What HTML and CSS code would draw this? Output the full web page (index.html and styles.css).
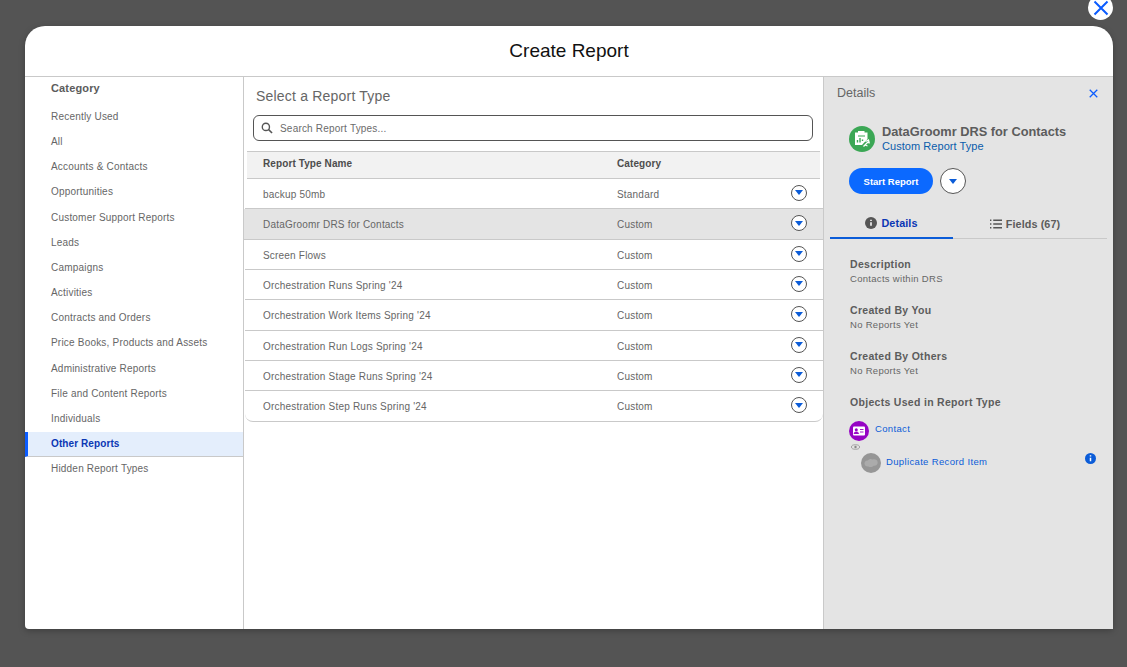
FILE: index.html
```html
<!DOCTYPE html>
<html lang="en">
<head>
<meta charset="utf-8">
<title>Create Report</title>
<link rel="stylesheet" href="styles.css">
</head>
<body>
<div class="modal">
  <button class="close-modal" aria-label="Close">
    <svg viewBox="0 0 16 16" width="16" height="16"><path d="M1.5 1.5l13 13M14.5 1.5l-13 13" fill="none" stroke="#0b5cff" stroke-width="2"/></svg>
  </button>
  <header class="modal-head">Create Report</header>
  <div class="modal-body">
    <nav class="cats">
      <h2 class="cats-title">Category</h2>
      <a class="cat">Recently Used</a>
      <a class="cat">All</a>
      <a class="cat">Accounts &amp; Contacts</a>
      <a class="cat">Opportunities</a>
      <a class="cat">Customer Support Reports</a>
      <a class="cat">Leads</a>
      <a class="cat">Campaigns</a>
      <a class="cat">Activities</a>
      <a class="cat">Contracts and Orders</a>
      <a class="cat">Price Books, Products and Assets</a>
      <a class="cat">Administrative Reports</a>
      <a class="cat">File and Content Reports</a>
      <a class="cat">Individuals</a>
      <a class="cat active">Other Reports</a>
      <a class="cat">Hidden Report Types</a>
    </nav>
    <main class="mid">
      <h2 class="mid-title">Select a Report Type</h2>
      <div class="search">
        <svg viewBox="0 0 14 14" width="12" height="12"><circle cx="5.7" cy="5.7" r="4.2" fill="none" stroke="#555" stroke-width="1.6"/><path d="M8.9 8.9l4 4" stroke="#555" stroke-width="1.8"/></svg>
        <span>Search Report Types...</span>
      </div>
      <div class="table">
        <div class="row head"><span class="c-name">Report Type Name</span><span class="c-cat">Category</span></div>
        <div class="row"><span class="c-name">backup 50mb</span><span class="c-cat">Standard</span><span class="drop"><i></i></span></div>
        <div class="row sel"><span class="c-name">DataGroomr DRS for Contacts</span><span class="c-cat">Custom</span><span class="drop"><i></i></span></div>
        <div class="row"><span class="c-name">Screen Flows</span><span class="c-cat">Custom</span><span class="drop"><i></i></span></div>
        <div class="row"><span class="c-name">Orchestration Runs Spring '24</span><span class="c-cat">Custom</span><span class="drop"><i></i></span></div>
        <div class="row"><span class="c-name">Orchestration Work Items Spring '24</span><span class="c-cat">Custom</span><span class="drop"><i></i></span></div>
        <div class="row"><span class="c-name">Orchestration Run Logs Spring '24</span><span class="c-cat">Custom</span><span class="drop"><i></i></span></div>
        <div class="row"><span class="c-name">Orchestration Stage Runs Spring '24</span><span class="c-cat">Custom</span><span class="drop"><i></i></span></div>
        <div class="row last"><span class="c-name">Orchestration Step Runs Spring '24</span><span class="c-cat">Custom</span><span class="drop"><i></i></span></div>
      </div>
    </main>
    <aside class="details">
      <div class="d-top">
        <span>Details</span>
        <svg viewBox="0 0 10 10" width="9" height="9"><path d="M.8.8l8.4 8.4M9.2.8L.8 9.2" stroke="#0b5cff" stroke-width="1.4" fill="none"/></svg>
      </div>
      <div class="d-id">
        <span class="d-icon">
          <svg viewBox="0 0 26 26" width="26" height="26"><circle cx="13" cy="13" r="13" fill="#3ba755"/><path d="M6 6.500h3V5h6.500v1.500h3V13l-5.500 6H6z" fill="#fff"/><path d="M9 10h7" stroke="#3ba755" stroke-width="1"/><path d="M8.500 16.500v-2.500M11 16.500v-4.500M13.500 15v-1.500" stroke="#3ba755" stroke-width="1.400"/><path d="M14.500 20.500l5.500-5.500M16.500 15.500l3-1.500.8 3.500M16 19l2.500 1" stroke="#fff" stroke-width="1.300" fill="none"/></svg>
        </span>
        <div>
          <div class="d-name">DataGroomr DRS for Contacts</div>
          <div class="d-sub">Custom Report Type</div>
        </div>
      </div>
      <div class="d-actions">
        <button class="start">Start Report</button>
        <span class="drop big"><i></i></span>
      </div>
      <div class="tabs">
        <div class="tab on">
          <svg viewBox="0 0 12 12" width="12" height="12"><circle cx="6" cy="6" r="6" fill="#555"/><path d="M6 5.200v3.600M6 2.800v1.300" stroke="#fff" stroke-width="1.500"/></svg>
          Details
        </div>
        <div class="tab">
          <svg viewBox="0 0 13 10" width="12" height="10"><path d="M3.500 1H13M3.500 5H13M3.500 9H13M0 1h1.500M0 5h1.500M0 9h1.500" stroke="#555" stroke-width="1.500"/></svg>
          Fields (67)
        </div>
      </div>
      <div class="info"><h3>Description</h3><p>Contacts within DRS</p></div>
      <div class="info"><h3>Created By You</h3><p>No Reports Yet</p></div>
      <div class="info"><h3>Created By Others</h3><p>No Reports Yet</p></div>
      <div class="info objs"><h3>Objects Used in Report Type</h3></div>
      <div class="obj">
        <svg viewBox="0 0 20 20" width="20" height="20"><circle cx="10" cy="10" r="10" fill="#9603c4"/><rect x="4" y="5.500" width="12" height="9" rx="1" fill="#fff"/><circle cx="7.300" cy="8.700" r="1.500" fill="#9603c4"/><path d="M5 12.500c.3-2 4.300-2 4.600 0zM11 8.500h3.500M11 11h3.500" fill="#9603c4" stroke="#9603c4" stroke-width=".9"/></svg>
        <a class="obj-link">Contact</a>
      </div>
      <svg class="eye" viewBox="0 0 10 6" width="9" height="6"><ellipse cx="5" cy="3" rx="4.500" ry="2.500" fill="none" stroke="#888" stroke-width=".8"/><circle cx="5" cy="3" r="1.300" fill="#888"/></svg>
      <div class="obj child">
        <svg viewBox="0 0 20 20" width="20" height="20"><circle cx="10" cy="10" r="10" fill="#969696"/><path d="M3.500 10.500c0-2 1.500-3.200 3.300-3C8 5.800 10.200 5.500 11.700 6.500c2.300-.7 5 .5 5 3 0 2.300-2.200 3.500-4 3.200-1.500 1.500-3.700 1.500-5.300.7-1.900.4-3.900-.7-3.900-2.900z" fill="#ababab"/></svg>
        <a class="obj-link">Duplicate Record Item</a>
        <svg class="obj-info" viewBox="0 0 11 11" width="11" height="11"><circle cx="5.500" cy="5.500" r="5.500" fill="#0b5cd8"/><path d="M5.500 4.700v3.600M5.500 2.300v1.300" stroke="#fff" stroke-width="1.500"/></svg>
      </div>
    </aside>
  </div>
</div>
</body>
</html>
```
FILE: styles.css
```css
* { box-sizing: border-box; }
html, body { height: 100%; }
body {
  margin: 0;
  padding: 26px 14px 38px 25px;
  background: #545454;
  font-family: "Liberation Sans", Arial, sans-serif;
  color: #555;
  overflow: hidden;
}
.modal {
  position: relative;
  height: 603px;
  background: #fff;
  border-radius: 20px 20px 4px 4px;
  display: flex;
  flex-direction: column;
  box-shadow: 0 2px 6px rgba(0,0,0,.25);
}
.close-modal {
  position: absolute;
  top: -31px;
  right: 0;
  width: 25px;
  height: 25px;
  padding: 0;
  border: 0;
  border-radius: 50%;
  background: #fff;
  display: flex;
  align-items: center;
  justify-content: center;
}
.modal-head {
  height: 51px;
  flex: none;
  border-bottom: 1px solid #c9c9c9;
  text-align: center;
  font-size: 19px;
  line-height: 49px;
  color: #111;
}
.modal-body { flex: 1; display: flex; min-height: 0; }

.cats { width: 219px; flex: none; border-right: 1px solid #c9c9c9; }
.cats-title {
  margin: 0;
  padding: 4px 0 0 26px;
  height: 26.8px;
  font-size: 11px;
  line-height: 14px;
  font-weight: 700;
  letter-spacing: .15px;
  color: #5c5c5c;
}
.cat {
  display: block;
  height: 25.2px;
  padding-left: 26px;
  font-size: 10px;
  line-height: 25.2px;
  letter-spacing: .2px;
  color: #666;
}
.cat.active {
  margin: .6px 0 -.6px;
  background: #e4eefc;
  border-left: 3px solid #0b5cff;
  border-bottom: 1px solid #c9c9c9;
  padding-left: 23px;
  line-height: 24px;
  font-weight: 700;
  letter-spacing: .1px;
  color: #0b37b4;
}

.mid { flex: 1; min-width: 0; border-right: 1px solid #c9c9c9; }
.mid-title {
  margin: 0;
  padding: 11px 0 0 12px;
  height: 38px;
  font-size: 14px;
  line-height: 17px;
  font-weight: 400;
  color: #666;
  letter-spacing: .2px;
}
.search {
  margin: 0 10px 0 9px;
  height: 26px;
  border: 1px solid #555;
  border-radius: 6px;
  display: flex;
  align-items: center;
  gap: 7px;
  padding-left: 7px;
  font-size: 10px;
  letter-spacing: .2px;
  color: #6b6b6b;
}
.table { margin-top: 10px; }
.row {
  height: 30.33px;
  margin-left: 1px;
  padding: 2px 0 0 18px;
  display: flex;
  align-items: center;
  border-bottom: 1px solid #c9c9c9;
  font-size: 10px;
  letter-spacing: .2px;
  color: #666;
}
.row.head {
  height: 28px;
  margin: 0 3px;
  padding: 0 0 3px 16px;
  background: #f2f2f2;
  border-top: 1px solid #c9c9c9;
  font-weight: 700;
  letter-spacing: .1px;
  color: #4d4d4d;
}
.row.sel { margin-left: 0; padding-left: 19px; background: #e4e4e4; }
.row.last { border-radius: 0 0 8px 8px; }
.c-name { width: 354px; flex: none; }
.c-cat { flex: 1; }
.drop {
  width: 16px;
  height: 16px;
  margin: -3.4px 16px 0 0;
  flex: none;
  border: 1px solid #555;
  border-radius: 50%;
  background: #fff;
  display: flex;
  align-items: center;
  justify-content: center;
}
.drop i {
  width: 0;
  height: 0;
  border-left: 4px solid transparent;
  border-right: 4px solid transparent;
  border-top: 5px solid #0b5cd8;
}
.drop.big { width: 26px; height: 26px; margin: 0; }
.drop.big i { border-left-width: 4.500px; border-right-width: 4.500px; }

.details { width: 289px; flex: none; background: #e4e4e4; padding: 0 6px; }
.d-top {
  height: 32px;
  padding: 8px 9px 0 7px;
  display: flex;
  justify-content: space-between;
  align-items: flex-start;
  font-size: 12.500px;
  line-height: 16px;
  color: #666;
}
.d-top svg { margin-top: 4px; }
.d-id { margin-top: 15px; padding-left: 19px; display: flex; gap: 7px; align-items: center; }
.d-icon { width: 26px; height: 26px; display: block; }
.d-name { font-size: 12.800px; line-height: 15px; font-weight: 700; color: #5c5c5c; }
.d-sub { font-size: 11px; line-height: 14px; letter-spacing: .05px; color: #0b5cab; }
.d-actions { margin-top: 15px; padding-left: 19px; display: flex; gap: 7px; }
.start {
  width: 84px;
  height: 26px;
  padding: 0;
  border: 0;
  border-radius: 13px;
  background: #0b69ff;
  color: #fff;
  font: 700 9.500px "Liberation Sans", Arial, sans-serif;
}
.tabs {
  margin-top: 14px;
  height: 31px;
  display: flex;
  border-bottom: 1px solid #c9c9c9;
}
.tab {
  width: 123px;
  height: 31px;
  display: flex;
  align-items: center;
  justify-content: center;
  gap: 4px;
  font-size: 10.800px;
  font-weight: 700;
  letter-spacing: .1px;
  color: #5c5c5c;
}
.tab + .tab { width: 131px; padding-left: 13px; }
.tab.on { color: #0b37b4; border-bottom: 2px solid #0b5cd8; }
.info { margin: 0 0 0 20px; height: 46px; }
.tabs + .info { margin-top: 18px; }
.info h3 { margin: 0; font-size: 10.500px; line-height: 14px; font-weight: 700; letter-spacing: .3px; color: #5c5c5c; }
.info p { margin: 1px 0 0; font-size: 9.500px; line-height: 13px; letter-spacing: .3px; color: #666; }
.info.objs { height: 26px; }
.obj { margin-left: 19px; display: flex; align-items: flex-start; gap: 6px; }
.obj-link { margin-top: 1px; font-size: 9.500px; letter-spacing: .35px; line-height: 14px; color: #0b5cd8; }
.eye { display: block; margin: 3px 0 0 21px; }
.obj.child { margin: 3px 0 0 31px; gap: 5px; }
.obj.child .obj-link { margin-top: 2px; }
.obj-info { margin-left: auto; margin-right: 11px; }
```
